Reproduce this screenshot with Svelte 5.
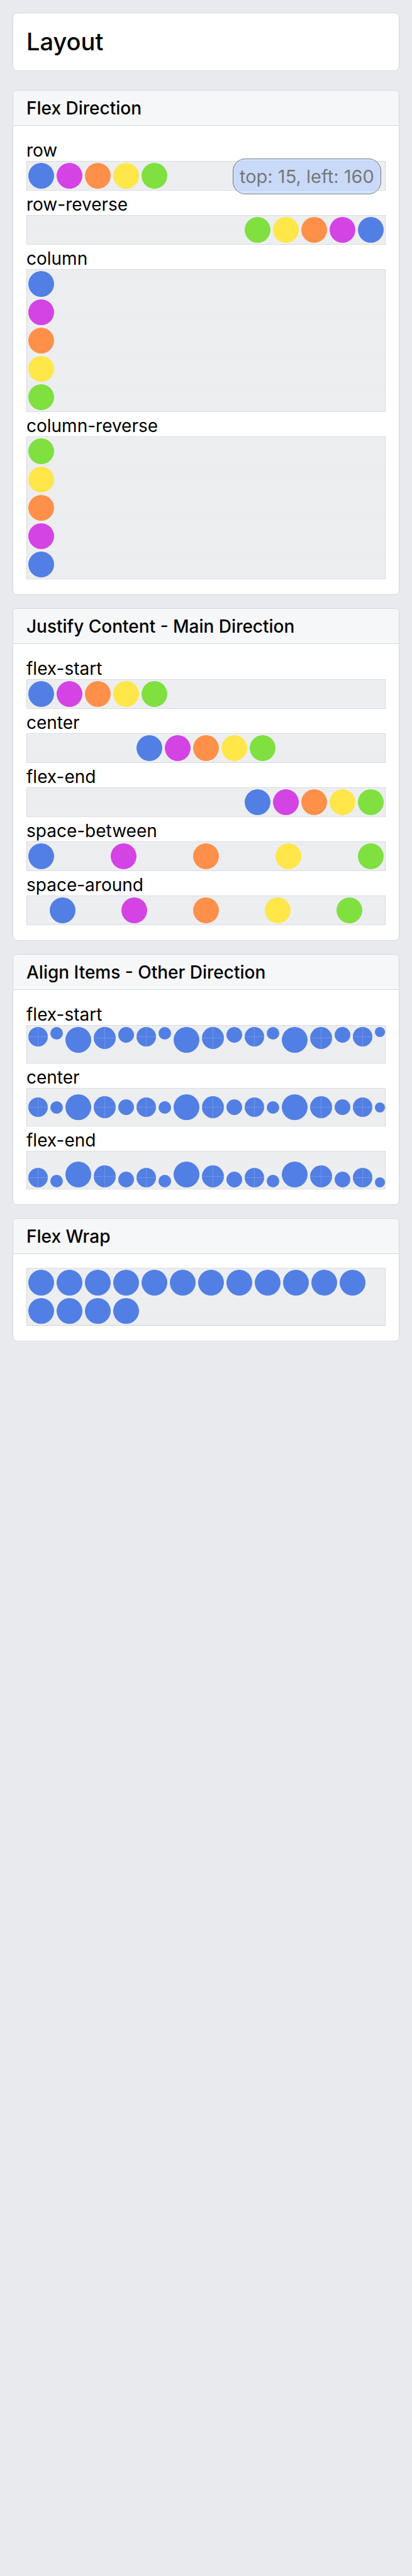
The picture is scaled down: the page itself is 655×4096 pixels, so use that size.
<script>
  const hues = ['#527fe4', '#d443e3', '#ff9049', '#ffe649', '#7fe040'];
  const rainbow = hues.map((color) => ({ color, size: 41 }));
  const cycle = [31, 20, 41, 35, 25];
  const mixed = [...cycle, ...cycle, ...cycle, 31, 16].map((size) => ({ color: hues[0], size }));
  const many = Array.from({ length: 16 }, () => ({ color: hues[0], size: 41 }));

  const blocks = [
    {
      title: 'Flex Direction',
      badge: 'top: 15, left: 160',
      rows: [
        { label: 'row', kind: 'row', dots: rainbow },
        { label: 'row-reverse', kind: 'row-reverse', dots: rainbow },
        { label: 'column', kind: 'column', dots: rainbow },
        { label: 'column-reverse', kind: 'column-reverse', dots: rainbow }
      ]
    },
    {
      title: 'Justify Content - Main Direction',
      rows: [
        { label: 'flex-start', kind: 'row', dots: rainbow },
        { label: 'center', kind: 'justify-center', dots: rainbow },
        { label: 'flex-end', kind: 'justify-end', dots: rainbow },
        { label: 'space-between', kind: 'justify-between', dots: rainbow },
        { label: 'space-around', kind: 'justify-around', dots: rainbow }
      ]
    },
    {
      title: 'Align Items - Other Direction',
      rows: [
        { label: 'flex-start', kind: 'tall align-start', dots: mixed },
        { label: 'center', kind: 'tall align-center', dots: mixed },
        { label: 'flex-end', kind: 'tall align-end', dots: mixed }
      ]
    },
    {
      title: 'Flex Wrap',
      rows: [{ label: '', kind: 'wrap', dots: many }]
    }
  ];
</script>

<main class="page">
  <header class="page-title"><h1>Layout</h1></header>

  {#each blocks as block}
    <section class="card">
      <h2>{block.title}</h2>
      <div class="body">
        <div class="content">
          {#each block.rows as row}
            <div class="example">
              {#if row.label}<p class="label">{row.label}</p>{/if}
              <div class="strip {row.kind}">
                {#each row.dots as dot}
                  <span
                    class="dot"
                    class:seam={dot.size === 31 || dot.size === 35}
                    style="width: {dot.size}px; height: {dot.size}px; background-color: {dot.color}"
                  ></span>
                {/each}
              </div>
            </div>
          {/each}
          {#if block.badge}<div class="badge">{block.badge}</div>{/if}
        </div>
      </div>
    </section>
  {/each}
</main>

<style>
  :global(body) {
    background: #e9eaed;
  }

  .page {
    box-sizing: border-box;
    min-height: 100vh;
    padding: 20px;
    background: #e9eaed;
    color: #000;
    font-family: Inter, 'Liberation Sans', sans-serif;
    font-size: 28px;
  }

  h1,
  h2,
  p {
    margin: 0;
  }

  .page-title {
    margin-bottom: 30px;
    padding: 22px 21px 23px;
    border: 1px solid #d6d7da;
    border-radius: 8px;
    background: #fff;
  }

  h1 {
    font-size: 38px;
    font-weight: 500;
    line-height: 46px;
  }

  .card {
    margin-bottom: 21px;
    border: 1px solid #d6d7da;
    border-radius: 7px;
    background: #fff;
  }

  h2 {
    padding: 11px 21px 10px;
    border-bottom: 1px solid #d6d7da;
    border-radius: 6px 6px 0 0;
    background: #f6f7f9;
    font-size: 28px;
    font-weight: 500;
    line-height: 34px;
  }

  .body {
    padding: 22px 21px 24px;
  }

  .content {
    position: relative;
    display: flex;
    flex-direction: column;
    gap: 5px;
  }

  .label {
    line-height: 34px;
  }

  .strip {
    display: flex;
    border: 1px solid #d6d7da;
    background: repeating-linear-gradient(#f6f7f9 0 1px, #e2e4e7 1px 2px);
  }

  .dot {
    flex: none;
    margin: 2px;
    border-radius: 50%;
  }

  .seam {
    background-image:
      linear-gradient(rgba(255, 255, 255, 0.17), rgba(255, 255, 255, 0.17)),
      linear-gradient(rgba(255, 255, 255, 0.17), rgba(255, 255, 255, 0.17));
    background-position: center;
    background-repeat: no-repeat;
    background-size: 1px 100%, 100% 1px;
  }

  .row-reverse { flex-direction: row-reverse; }
  .column { flex-direction: column; }
  .column-reverse { flex-direction: column-reverse; }
  .justify-center { justify-content: center; }
  .justify-end { justify-content: flex-end; }
  .justify-between { justify-content: space-between; }
  .justify-around { justify-content: space-around; }
  .tall { height: 59px; }
  .align-start { align-items: flex-start; }
  .align-center { align-items: center; }
  .align-end { align-items: flex-end; }
  .wrap { flex-wrap: wrap; }

  .badge {
    position: absolute;
    top: 30px;
    left: 328px;
    padding: 10px;
    border: 1px solid #000;
    border-radius: 20px;
    background: #a5c8ff;
    font-size: 29px;
    line-height: 35px;
    white-space: nowrap;
    opacity: 0.5;
  }
</style>
